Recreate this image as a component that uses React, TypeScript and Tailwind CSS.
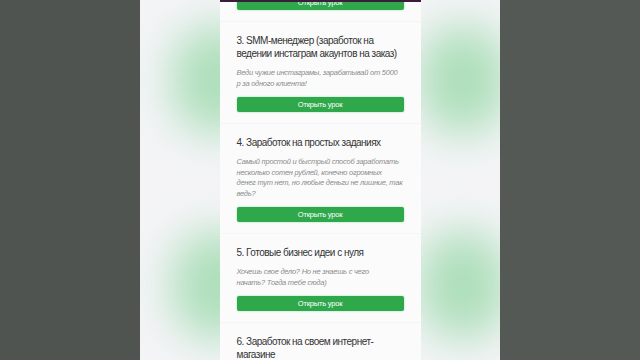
import React from 'react';

interface Lesson {
  title: string;
  text: string;
}

// line breaks follow the layout of the original page
const lessons: Lesson[] = [
  {
    title: '3. SMM-менеджер (заработок на\nведении инстаграм акаунтов на заказ)',
    text: 'Веди чужие инстаграмы, зарабатывай от 5000\nр за одного клиента!',
  },
  {
    title: '4. Заработок на простых заданиях',
    text: 'Самый простой и быстрый способ заработать\nнесколько сотен рублей, конечно огромных\nденег тут нет, но любые деньги не лишние, так\nведь?',
  },
  {
    title: '5. Готовые бизнес идеи с нуля',
    text: 'Хочешь свое дело? Но не знаешь с чего\nначать? Тогда тебе сюда)',
  },
];

const OpenButton = () => (
  <button className="block w-full h-[15px] rounded-[2px] bg-[#2fa84b] text-white text-[7.5px] leading-[15px] tracking-[-0.2px] shadow-[0_0_2px_rgba(60,200,90,0.6)]">
    Открыть урок
  </button>
);

// soft green blobs behind the card
const Glow = ({ className }: { className: string }) => (
  <div className={`absolute w-[90px] h-[110px] rounded-full bg-[#7fd192] opacity-60 blur-[22px] ${className}`} />
);

export default function App() {
  return (
    <div
      className="w-[640px] h-[360px] overflow-hidden flex bg-[#515651]"
      style={{ fontFamily: '"Liberation Sans", Arial, sans-serif' }}
    >
      <div className="w-[140px] shrink-0 bg-[#4f5450]" />
      <div className="relative w-[360px] shrink-0 bg-[#f4f4f7] flex justify-center overflow-hidden">
        <Glow className="left-[32px] top-[25px]" />
        <Glow className="left-[32px] top-[230px]" />
        <Glow className="left-[278px] top-[25px]" />
        <Glow className="left-[278px] top-[230px]" />

        <div className="relative w-[201px] bg-[#fbfbfc] flex flex-col">
          <div className="absolute left-0 right-0 top-0 h-[2px] bg-[#3a1d3c] z-10" />
          <div className="px-[17px] mt-[-5px] pb-[11px]">
            <OpenButton />
          </div>
          {lessons.map((l) => (
            <div key={l.title} className="px-[17px] pt-[12px] pb-[11px] border-t border-[#f5f5f7]">
              <h3 className="whitespace-pre-line text-[10px] leading-[13px] text-[#333] tracking-[-0.5px]">{l.title}</h3>
              <p className="whitespace-pre-line mt-[8px] text-[7.5px] leading-[10.5px] italic text-[#8b8b8b] tracking-[-0.25px]">
                {l.text}
              </p>
              <div className="mt-[8px]">
                <OpenButton />
              </div>
            </div>
          ))}
          <div className="px-[17px] pt-[12px] border-t border-[#f5f5f7]">
            <h3 className="whitespace-pre-line text-[10px] leading-[13px] text-[#333] tracking-[-0.5px]">
              {'6. Заработок на своем интернет-\nмагазине'}
            </h3>
          </div>
        </div>
      </div>
      <div className="flex-1 bg-[#555956]" />
    </div>
  );
}
